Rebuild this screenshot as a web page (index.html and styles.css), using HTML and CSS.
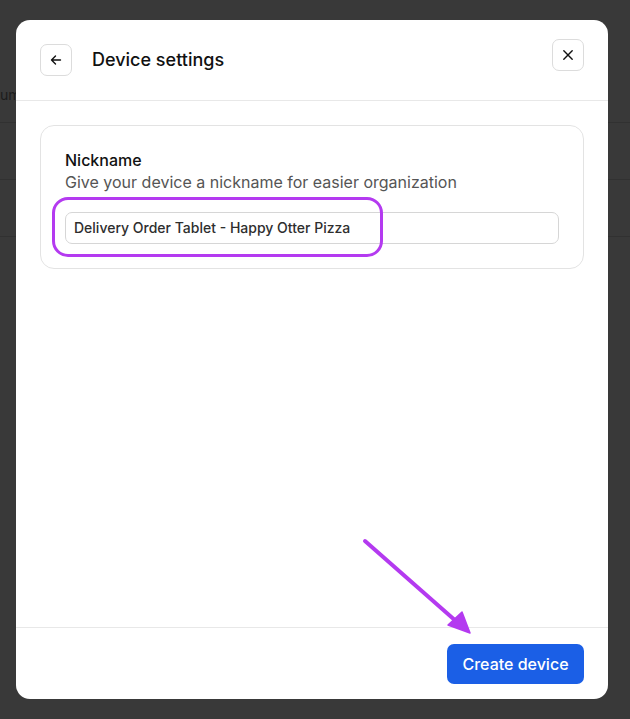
FILE: index.html
```html
<!DOCTYPE html>
<html lang="en">
<head>
<meta charset="utf-8">
<title>Device settings</title>
<link rel="stylesheet" href="styles.css">
</head>
<body>
<div class="page">
  <div class="bg-head"><span class="bg-col">um</span></div>
  <div class="bg-row"></div>
  <div class="bg-row"></div>
</div>

<div class="modal">
  <header class="modal-header">
    <button class="icon-btn" aria-label="Back">
      <svg width="14" height="14" viewBox="0 0 14 14" fill="none" stroke="#111" stroke-width="1.4" stroke-linecap="round" stroke-linejoin="round"><path d="M11.5 7H2.5M6.5 3L2.5 7L6.5 11"/></svg>
    </button>
    <h1 class="title">Device settings</h1>
    <button class="icon-btn close" aria-label="Close">
      <svg width="14" height="14" viewBox="0 0 14 14" fill="none" stroke="#111" stroke-width="1.4" stroke-linecap="round"><path d="M2.8 2.8L11.2 11.2M11.2 2.8L2.8 11.2"/></svg>
    </button>
  </header>
  <main class="modal-body">
    <section class="card">
      <div class="label">Nickname</div>
      <div class="desc">Give your device a nickname for easier organization</div>
      <div class="input">Delivery Order Tablet - Happy Otter Pizza</div>
    </section>
  </main>
  <footer class="modal-footer">
    <button class="primary">Create device</button>
  </footer>
</div>

<div class="highlight"></div>
<svg class="arrow" width="630" height="719" viewBox="0 0 630 719">
  <line x1="365" y1="541" x2="457" y2="622" stroke="#b43af0" stroke-width="4" stroke-linecap="round"/>
  <polygon points="470,633 448,625 462,612" fill="#b43af0" stroke="#b43af0" stroke-width="1.5" stroke-linejoin="round"/>
</svg>
</body>
</html>
```
FILE: styles.css
```css
* { box-sizing: border-box; }
html, body { margin: 0; padding: 0; }
body {
  width: 630px;
  height: 719px;
  overflow: hidden;
  background: #393939;
  font-family: Inter, "Noto Sans", "Liberation Sans", sans-serif;
  position: relative;
}

.bg-head {
  height: 123px;
  border-bottom: 1px solid #313131;
  display: flex;
  align-items: flex-start;
  padding-top: 85px;
}
.bg-col {
  font-size: 14px;
  line-height: 20px;
  color: #1c1c1c;
}
.bg-row {
  height: 57px;
  border-bottom: 1px solid #313131;
}

.modal {
  position: absolute;
  left: 16px;
  top: 20px;
  width: 592px;
  height: 679px;
  background: #fff;
  border-radius: 14px;
  display: flex;
  flex-direction: column;
  overflow: hidden;
}
.modal-header {
  height: 81px;
  padding: 24px 24px 0;
  border-bottom: 1px solid #e8e8e8;
  display: flex;
  align-items: flex-start;
}
.icon-btn {
  width: 32px;
  height: 32px;
  border: 1px solid #dcdcdc;
  border-radius: 7px;
  background: #fff;
  display: flex;
  align-items: center;
  justify-content: center;
  padding: 0;
  flex: none;
}
.icon-btn.close { margin-left: auto; margin-top: -5px; }
.title {
  margin: 0 0 0 20px;
  font-size: 18px;
  line-height: 32px;
  font-weight: 500;
  color: #111;
}

.modal-body {
  flex: 1;
  padding: 24px;
}
.card {
  border: 1px solid #e3e3e3;
  border-radius: 14px;
  padding: 24px;
}
.label {
  font-size: 16px;
  line-height: 20px;
  font-weight: 500;
  color: #111;
}
.desc {
  font-size: 16px;
  line-height: 24px;
  color: #555;
}
.input {
  margin-top: 18px;
  height: 32px;
  border: 1px solid #d6d6d6;
  border-radius: 7px;
  padding: 0 8px;
  font-size: 14px;
  line-height: 30px;
  font-weight: 500;
  color: #2e2e2e;
}

.modal-footer {
  border-top: 1px solid #e8e8e8;
  padding: 16px 24px 15px;
  display: flex;
  justify-content: flex-end;
}
.primary {
  height: 40px;
  width: 137px;
  border: none;
  border-radius: 7px;
  background: #1b5fe6;
  color: #fff;
  font-family: inherit;
  font-size: 16px;
  font-weight: 500;
  padding: 0;
}

.highlight {
  position: absolute;
  left: 52px;
  top: 197px;
  width: 331px;
  height: 60px;
  border: 3.5px solid #b43af0;
  border-radius: 16px;
}
.arrow {
  position: absolute;
  left: 0;
  top: 0;
  pointer-events: none;
}
```
